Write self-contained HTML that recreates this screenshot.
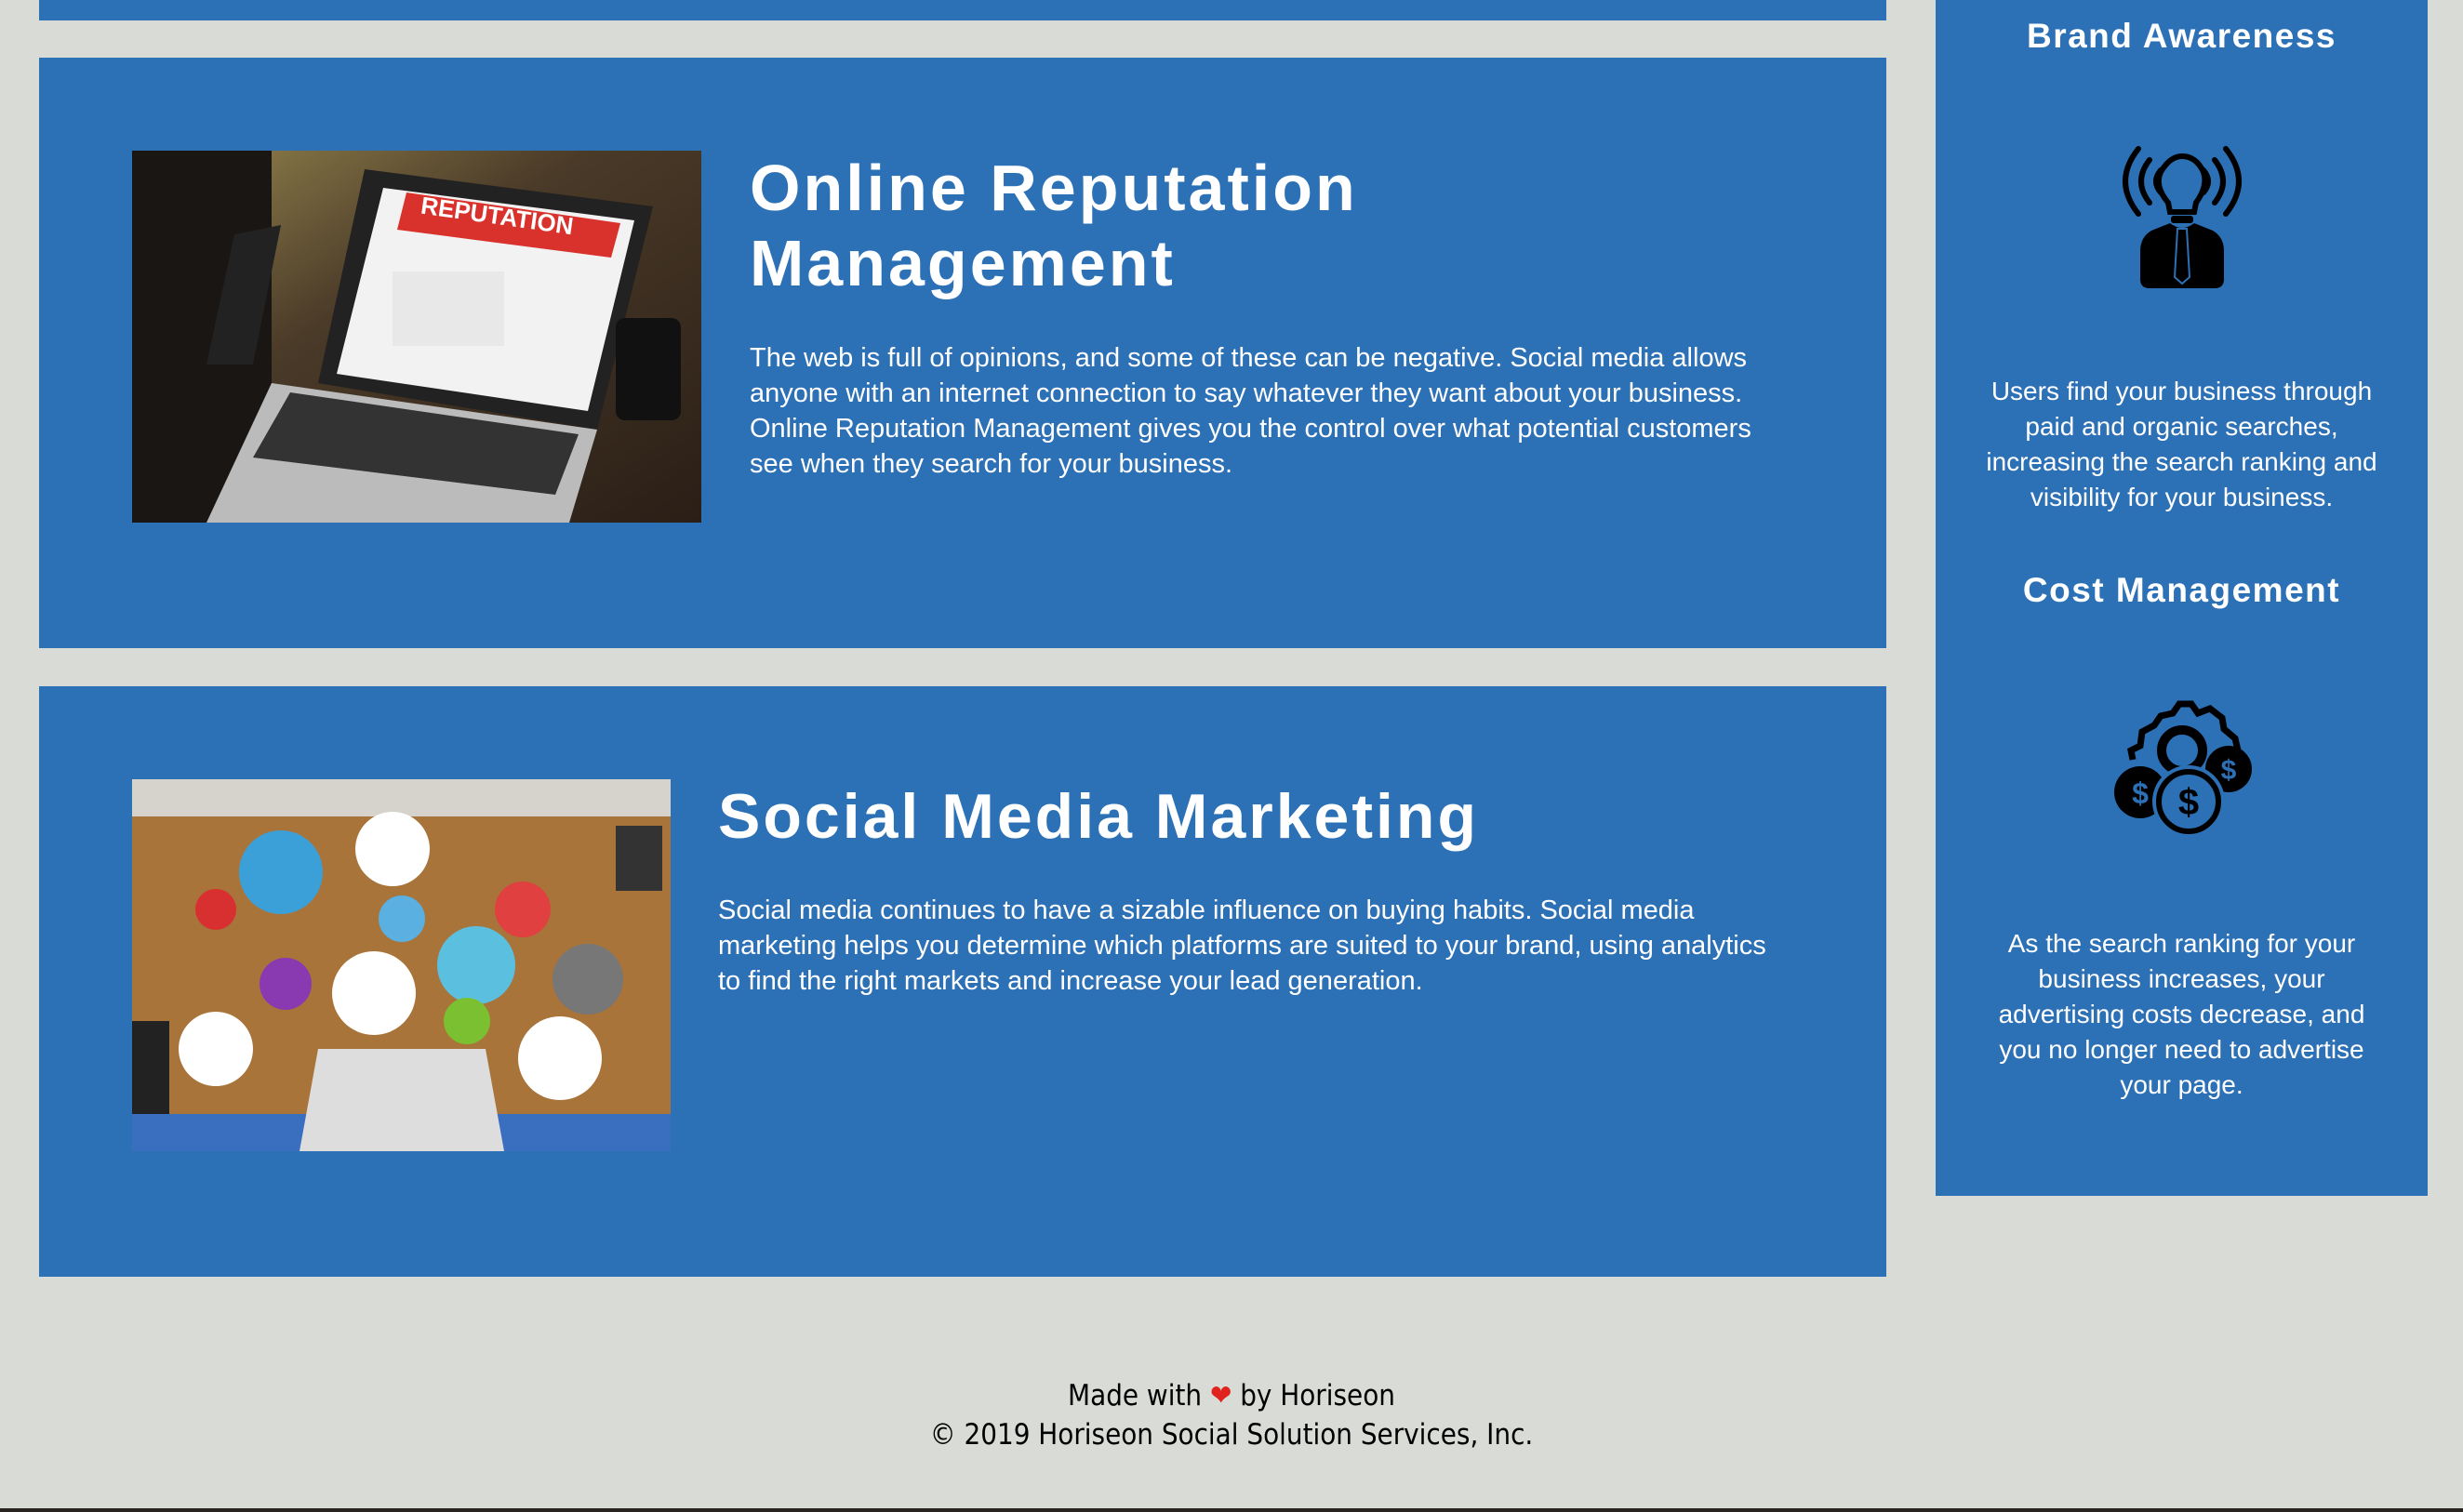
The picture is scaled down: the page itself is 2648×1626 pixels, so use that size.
<!DOCTYPE html>
<html><head><meta charset="utf-8"><style>
*{margin:0;padding:0;box-sizing:border-box}
body{width:2648px;height:1626px;background:#d9dcd6;position:relative;overflow:hidden;font-family:"Liberation Sans",sans-serif;color:#fff}
.b{position:absolute;background:#2c70b6}
.abs{position:absolute}
h2{position:absolute;font-weight:bold;line-height:81px;letter-spacing:3px;white-space:nowrap}
p.t{position:absolute;font-size:29px;line-height:38px;white-space:nowrap}
.side h3{position:absolute;width:529px;text-align:center;font-size:37px;font-weight:bold;left:0;letter-spacing:1.5px}
.side p{position:absolute;width:529px;text-align:center;font-size:28px;line-height:38px;left:0;white-space:nowrap}
.foot{position:absolute;left:0;width:2648px;text-align:center;color:#000;font-family:"DejaVu Sans Condensed","DejaVu Sans",sans-serif;font-size:31px;line-height:42px}
</style></head><body>
<div class="b" style="left:42px;top:0;width:1986px;height:22px"></div>

<div class="b" style="left:42px;top:62px;width:1986px;height:635px">
  <svg class="abs" style="left:100px;top:100px" width="612" height="400" viewBox="0 0 612 400">
    <defs><linearGradient id="g1" x1="0" y1="0" x2="1" y2="1"><stop offset="0" stop-color="#9a8a50"/><stop offset=".4" stop-color="#4a3a28"/><stop offset="1" stop-color="#2a1e16"/></linearGradient></defs>
    <rect width="612" height="400" fill="url(#g1)"/>
    <rect x="0" y="0" width="150" height="400" fill="#1a1614"/>
    <polygon points="250,20 560,60 500,300 200,250" fill="#222"/>
    <polygon points="270,40 540,75 490,280 220,240" fill="#f2f2f2"/>
    <polygon points="295,45 525,78 515,115 285,85" fill="#d9322c"/>
    <text x="310" y="80" font-size="26" font-weight="bold" fill="#fff" transform="rotate(8 400 70)" font-family="Liberation Sans">REPUTATION</text>
    <rect x="280" y="130" width="120" height="80" fill="#e8e8e8"/>
    <polygon points="150,250 500,300 470,400 80,400" fill="#bbb"/>
    <polygon points="170,260 480,305 455,370 130,330" fill="#333"/>
    <rect x="520" y="180" width="70" height="110" rx="10" fill="#111"/>
    <polygon points="110,90 160,80 130,230 80,230" fill="#222"/>
  </svg>
  <h2 style="left:764px;top:100px;font-size:70px">Online Reputation<br>Management</h2>
  <p class="t" style="left:764px;top:304px">The web is full of opinions, and some of these can be negative. Social media allows<br>anyone with an internet connection to say whatever they want about your business.<br>Online Reputation Management gives you the control over what potential customers<br>see when they search for your business.</p>
</div>

<div class="b" style="left:42px;top:738px;width:1986px;height:635px">
  <svg class="abs" style="left:100px;top:100px" width="579" height="400" viewBox="0 0 579 400">
    <rect width="579" height="400" fill="#a8743a"/>
    <rect y="0" width="579" height="40" fill="#d6d2cc"/>
    <rect y="360" width="579" height="40" fill="#3a6fc0"/>
    <circle cx="160" cy="100" r="45" fill="#3ba0d8"/>
    <circle cx="280" cy="75" r="40" fill="#fff"/>
    <circle cx="370" cy="200" r="42" fill="#5bc0e0"/>
    <circle cx="165" cy="220" r="28" fill="#8a3ab0"/>
    <circle cx="420" cy="140" r="30" fill="#e04040"/>
    <circle cx="490" cy="215" r="38" fill="#777"/>
    <circle cx="90" cy="290" r="40" fill="#fff"/>
    <circle cx="260" cy="230" r="45" fill="#fff"/>
    <circle cx="460" cy="300" r="45" fill="#fff"/>
    <circle cx="90" cy="140" r="22" fill="#d83030"/>
    <circle cx="360" cy="260" r="25" fill="#7bc030"/>
    <circle cx="290" cy="150" r="25" fill="#5ab0e0"/>
    <polygon points="200,290 380,290 400,400 180,400" fill="#ddd"/>
    <rect x="0" y="260" width="40" height="100" fill="#222"/>
    <rect x="520" y="50" width="50" height="70" fill="#333"/>
  </svg>
  <h2 style="left:730px;top:100px;font-size:68px">Social Media Marketing</h2>
  <p class="t" style="left:730px;top:222px">Social media continues to have a sizable influence on buying habits. Social media<br>marketing helps you determine which platforms are suited to your brand, using analytics<br>to find the right markets and increase your lead generation.</p>
</div>

<div class="b side" style="left:2081px;top:0;width:529px;height:1286px">
  <h3 style="top:18px">Brand Awareness</h3>
  <svg class="abs" style="left:190px;top:150px" width="150" height="160" viewBox="0 0 150 160">
    <g fill="none" stroke="#000" stroke-width="6" stroke-linecap="round">
      <path d="M28 10 Q0 45 28 80"/><path d="M40 22 Q22 45 40 68"/><path d="M52 33 Q42 45 52 57"/>
      <path d="M122 10 Q150 45 122 80"/><path d="M110 22 Q128 45 110 68"/><path d="M98 33 Q108 45 98 57"/>
      <path d="M60 68 Q45 50 52 35 Q62 18 75 18 Q90 18 98 35 Q103 50 90 68 L88 78 L62 78 Z"/>
    </g>
    <rect x="63" y="82" width="24" height="8" rx="3" fill="#000"/>
    <path d="M42 98 L62 90 Q75 100 88 90 L108 98 Q120 105 120 120 L120 150 Q120 160 110 160 L40 160 Q30 160 30 150 L30 120 Q30 105 42 98 Z" fill="#000"/>
    <path d="M70 96 L80 96 L83 148 L75 155 L67 148 Z" fill="none" stroke="#2c70b6" stroke-width="2"/>
  </svg>
  <p style="top:402px">Users find your business through<br>paid and organic searches,<br>increasing the search ranking and<br>visibility for your business.</p>
  <h3 style="top:614px">Cost Management</h3>
  <svg class="abs" style="left:190px;top:752px" width="152" height="150" viewBox="0 0 152 150">
    <path d="M22 65 L20 55 L30 50 L32 35 L45 28 L52 18 L65 15 L72 5 L85 5 L92 15 L105 10 L118 20 L120 32 L132 42 L135 55" fill="none" stroke="#000" stroke-width="7"/>
    <circle cx="75" cy="55" r="22" fill="none" stroke="#000" stroke-width="10"/>
    <circle cx="125" cy="75" r="25" fill="#000"/>
    <circle cx="30" cy="100" r="28" fill="#000"/>
    <circle cx="82" cy="110" r="36" fill="#2c70b6" stroke="#2c70b6" stroke-width="6"/>
    <circle cx="82" cy="110" r="32" fill="none" stroke="#000" stroke-width="6"/>
    <text x="125" y="86" font-size="30" font-weight="bold" text-anchor="middle" fill="#2c70b6" font-family="Liberation Sans">$</text>
    <text x="30" y="112" font-size="32" font-weight="bold" text-anchor="middle" fill="#2c70b6" font-family="Liberation Sans">$</text>
    <text x="82" y="124" font-size="40" font-weight="bold" text-anchor="middle" fill="#000" font-family="Liberation Sans">$</text>
  </svg>
  <p style="top:996px">As the search ranking for your<br>business increases, your<br>advertising costs decrease, and<br>you no longer need to advertise<br>your page.</p>
</div>

<div class="foot" style="top:1480px">Made with <span style="color:#e0231c">❤</span> by Horiseon<br>© 2019 Horiseon Social Solution Services, Inc.</div>
<div class="abs" style="left:0;top:1622px;width:2648px;height:4px;background:#2a2420"></div>
</body></html>
